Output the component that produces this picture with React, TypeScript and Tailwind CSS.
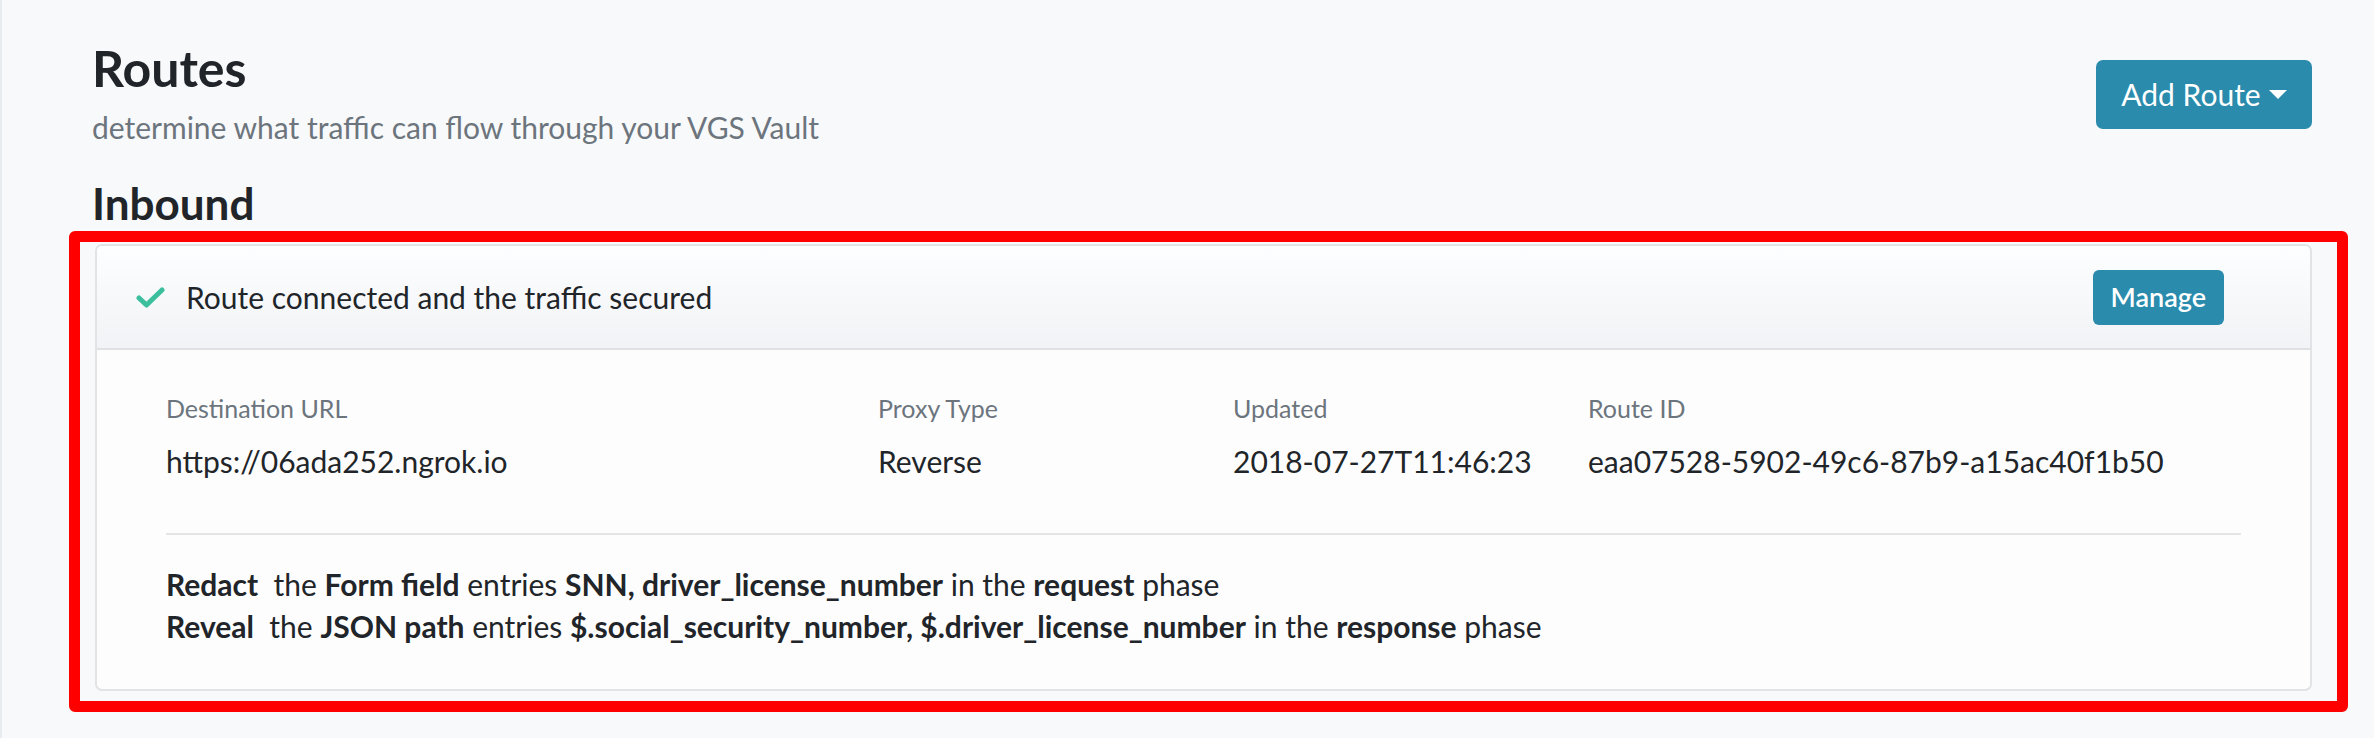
import { ReactNode } from "react";

const font = { fontFamily: "Lato, 'Open Sans', sans-serif" };

function Check() {
  return (
    <svg width="29" height="21" viewBox="0 0 29 21" aria-hidden>
      <path
        d="M3 11 L10.5 18 L26 3"
        fill="none"
        stroke="#3cbf9d"
        strokeWidth="5"
        strokeLinecap="round"
        strokeLinejoin="round"
      />
    </svg>
  );
}

function Field({ label, value }: { label: string; value: string }) {
  return (
    <div>
      <div className="text-[25px] leading-[31px] text-[#6c757d]">{label}</div>
      <div className="mt-[19px] text-[30px] leading-[36px] text-[#212529]">{value}</div>
    </div>
  );
}

function B({ children }: { children: ReactNode }) {
  return <span className="font-bold">{children}</span>;
}

export default function App() {
  return (
    <div
      style={font}
      className="min-h-[738px] border-l-2 border-[#e9ecef] bg-[#f8f9fa] pl-[90px] pr-[62px] pt-[38px] text-[#212529]"
    >
      <div className="flex items-start justify-between">
        <div>
          <h1 className="text-[50px] font-bold leading-[60px]">Routes</h1>
          <p className="mt-[11px] text-[30px] leading-[37px] text-[#6c757d]">
            determine what traffic can flow through your VGS Vault
          </p>
        </div>
        <button
          type="button"
          className="mt-[22px] flex h-[69px] w-[216px] items-center justify-center rounded-[7px] bg-[#2a8bad] text-[30px] text-white"
        >
          Add Route
          <span className="ml-[8px] h-0 w-0 border-x-[9px] border-t-[9px] border-x-transparent border-t-white" />
        </button>
      </div>

      <h2 className="mt-[31px] text-[44px] font-bold leading-[53px]">Inbound</h2>

      <div className="relative mt-[14px] ml-[3px]">
        <div className="overflow-hidden rounded-[7px] border-2 border-[#e1e3e5] bg-[#fdfdfd]">
          <div className="flex h-[104px] items-center justify-between border-b-2 border-[#dfe1e4] bg-linear-to-b from-[#fdfeff] to-[#f1f3f6] pl-[39px] pr-[86px]">
            <div className="flex items-center gap-[21px]">
              <Check />
              <span className="text-[30px] leading-[36px]">Route connected and the traffic secured</span>
            </div>
            <button
              type="button"
              className="h-[55px] rounded-[6px] bg-[#2a8bad] px-[18px] text-[27px] font-semibold text-white"
            >
              Manage
            </button>
          </div>

          <div className="px-[69px] pb-[42px] pt-[43px]">
            <div className="grid grid-cols-[712px_355px_355px_1fr]">
              <Field label="Destination URL" value="https://06ada252.ngrok.io" />
              <Field label="Proxy Type" value="Reverse" />
              <Field label="Updated" value="2018-07-27T11:46:23" />
              <Field label="Route ID" value="eaa07528-5902-49c6-87b9-a15ac40f1b50" />
            </div>

            <div className="mt-[54px] h-[2px] bg-[#e4e5e6]" />

            <div className="mt-[28px] whitespace-pre text-[30px] leading-[42px]">
              <div>
                <B>Redact</B>  the <B>Form field</B> entries <B>SNN, driver_license_number</B> in the{" "}
                <B>request</B> phase
              </div>
              <div>
                <B>Reveal</B>  the <B>JSON path</B> entries{" "}
                <B>$.social_security_number, $.driver_license_number</B> in the <B>response</B> phase
              </div>
            </div>
          </div>
        </div>

        {/* annotation frame drawn over the card */}
        <div className="pointer-events-none absolute -bottom-[21px] -left-[26px] -right-[36px] -top-[13px] rounded-[6px] border-[11px] border-[#ff0000]" />
      </div>
    </div>
  );
}
